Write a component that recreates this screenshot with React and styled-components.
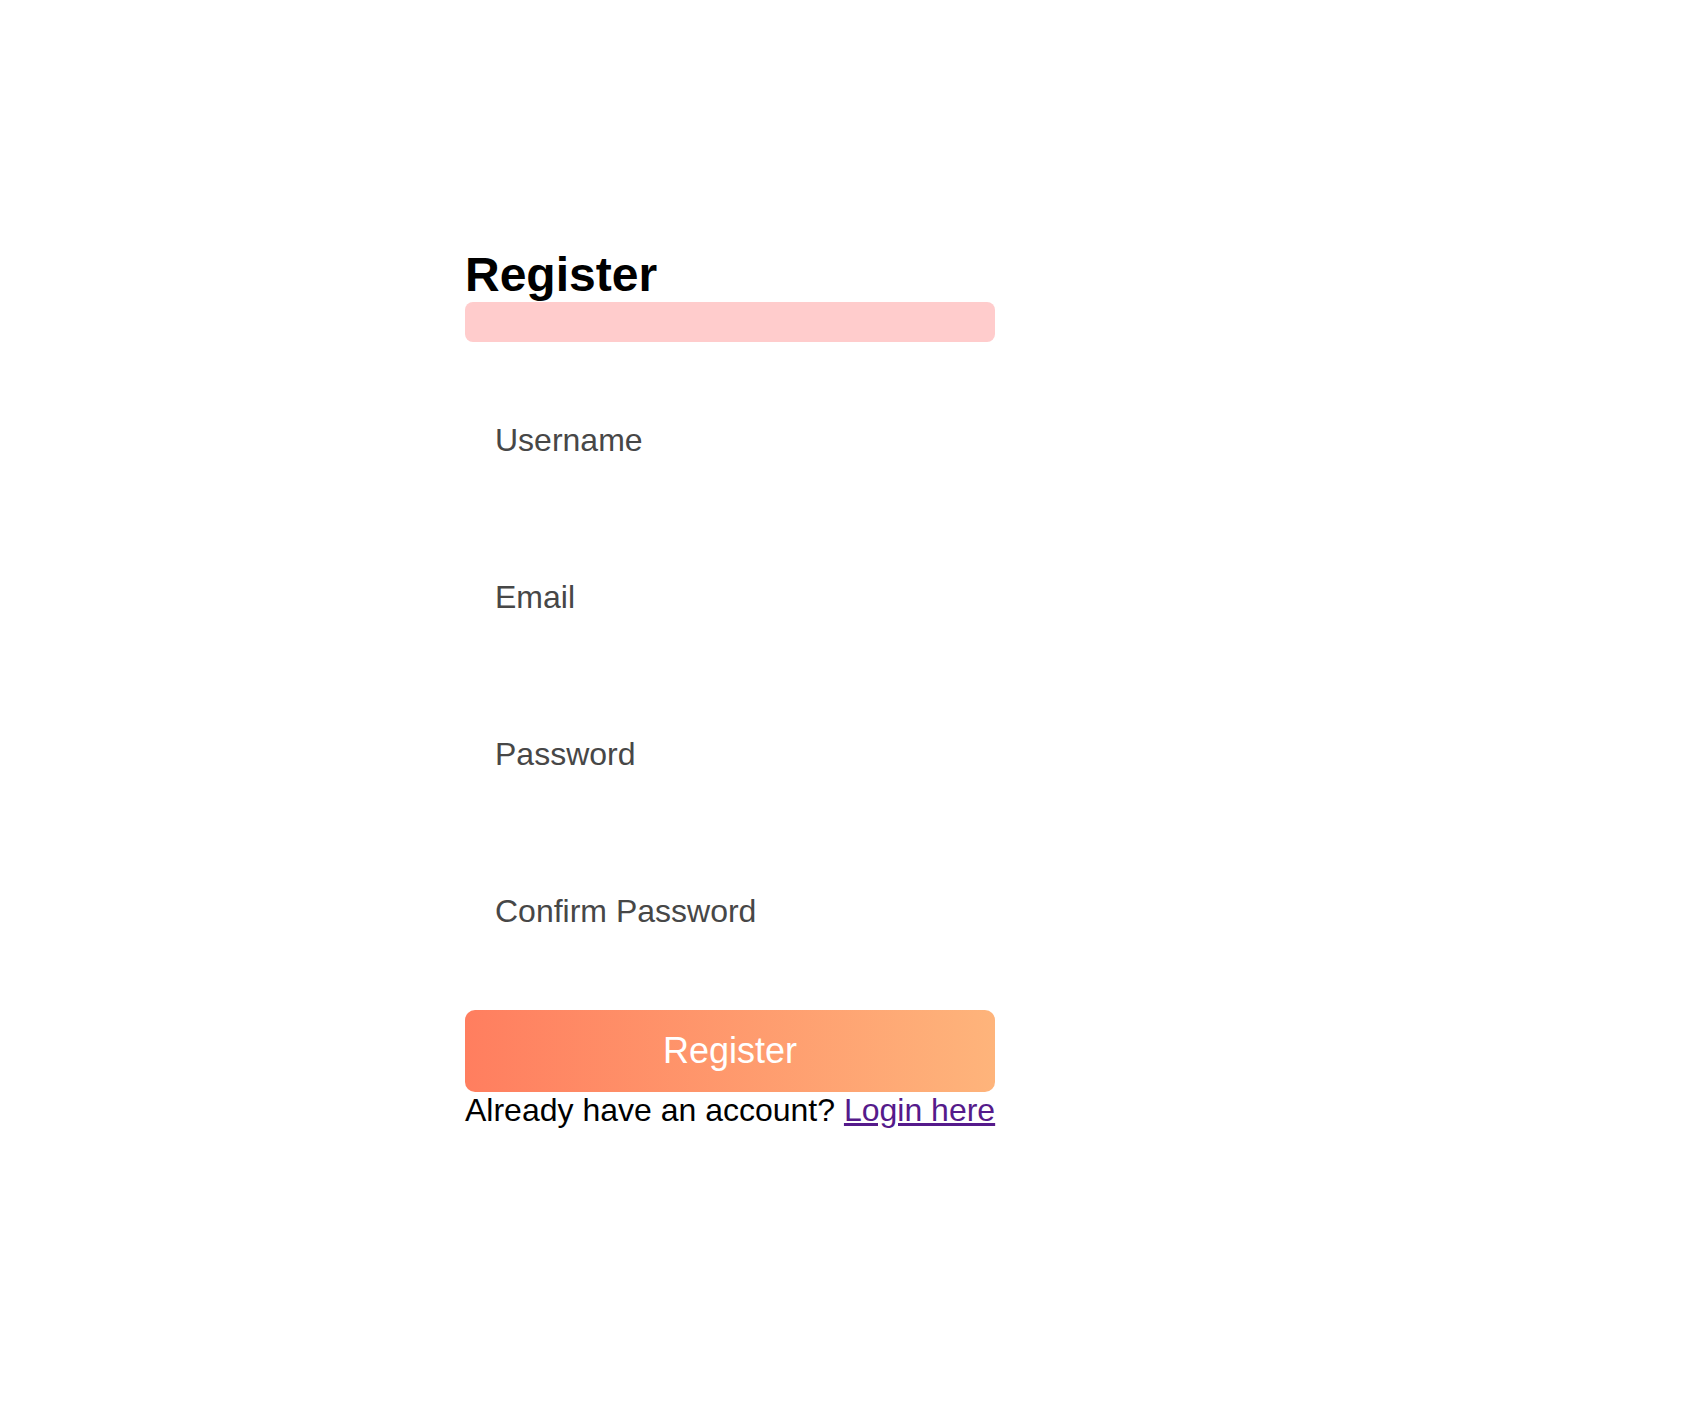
import React from "react";
import styled, { createGlobalStyle } from "styled-components";

const GlobalStyle = createGlobalStyle`
  body {
    margin: 0;
    background: #fff;
    font-family: "Liberation Sans", Arial, sans-serif;
  }
`;

const Page = styled.div`
  min-height: 1413px;
  box-sizing: border-box;
  padding: 248px 0 0 465px;
`;

const Card = styled.div`
  width: fit-content;
  display: flex;
  flex-direction: column;
`;

const Title = styled.h1`
  margin: 0;
  font-size: 48px;
  line-height: 54px;
  font-weight: bold;
  color: #000;
`;

const ErrorBox = styled.div`
  height: 40px;
  background: #ffcccc;
  border-radius: 8px;
`;

const Form = styled.form`
  display: flex;
  flex-direction: column;
  gap: 60px;
  margin: 50px 0 0;
`;

const Input = styled.input`
  display: block;
  box-sizing: border-box;
  width: 100%;
  height: 97px;
  padding: 30px;
  border: none;
  outline: none;
  background: transparent;
  font-family: inherit;
  font-size: 32px;
  line-height: 37px;
  color: #474747;

  &::placeholder {
    color: #474747;
    opacity: 1;
  }
`;

const SubmitButton = styled.button`
  display: block;
  width: 100%;
  height: 82px;
  margin-top: 50px;
  border: none;
  border-radius: 10px;
  background: linear-gradient(to right, #ff7e5f, #feb47b);
  color: #fff;
  font-family: inherit;
  font-size: 36px;
  cursor: pointer;
`;

const Footer = styled.p`
  margin: 0;
  font-size: 32px;
  line-height: 37px;
  color: #000;
  white-space: nowrap;

  a {
    color: #551a8b;
    text-decoration: underline;
  }
`;

export default function App() {
  return (
    <>
      <GlobalStyle />
      <Page>
        <Card>
          <Title>Register</Title>
          <ErrorBox />
          <Form onSubmit={e => e.preventDefault()}>
            <Input type="text" placeholder="Username" />
            <Input type="email" placeholder="Email" />
            <Input type="password" placeholder="Password" />
            <Input type="password" placeholder="Confirm Password" />
          </Form>
          <SubmitButton type="button">Register</SubmitButton>
          <Footer>
            Already have an account? <a href="#login">Login here</a>
          </Footer>
        </Card>
      </Page>
    </>
  );
}
